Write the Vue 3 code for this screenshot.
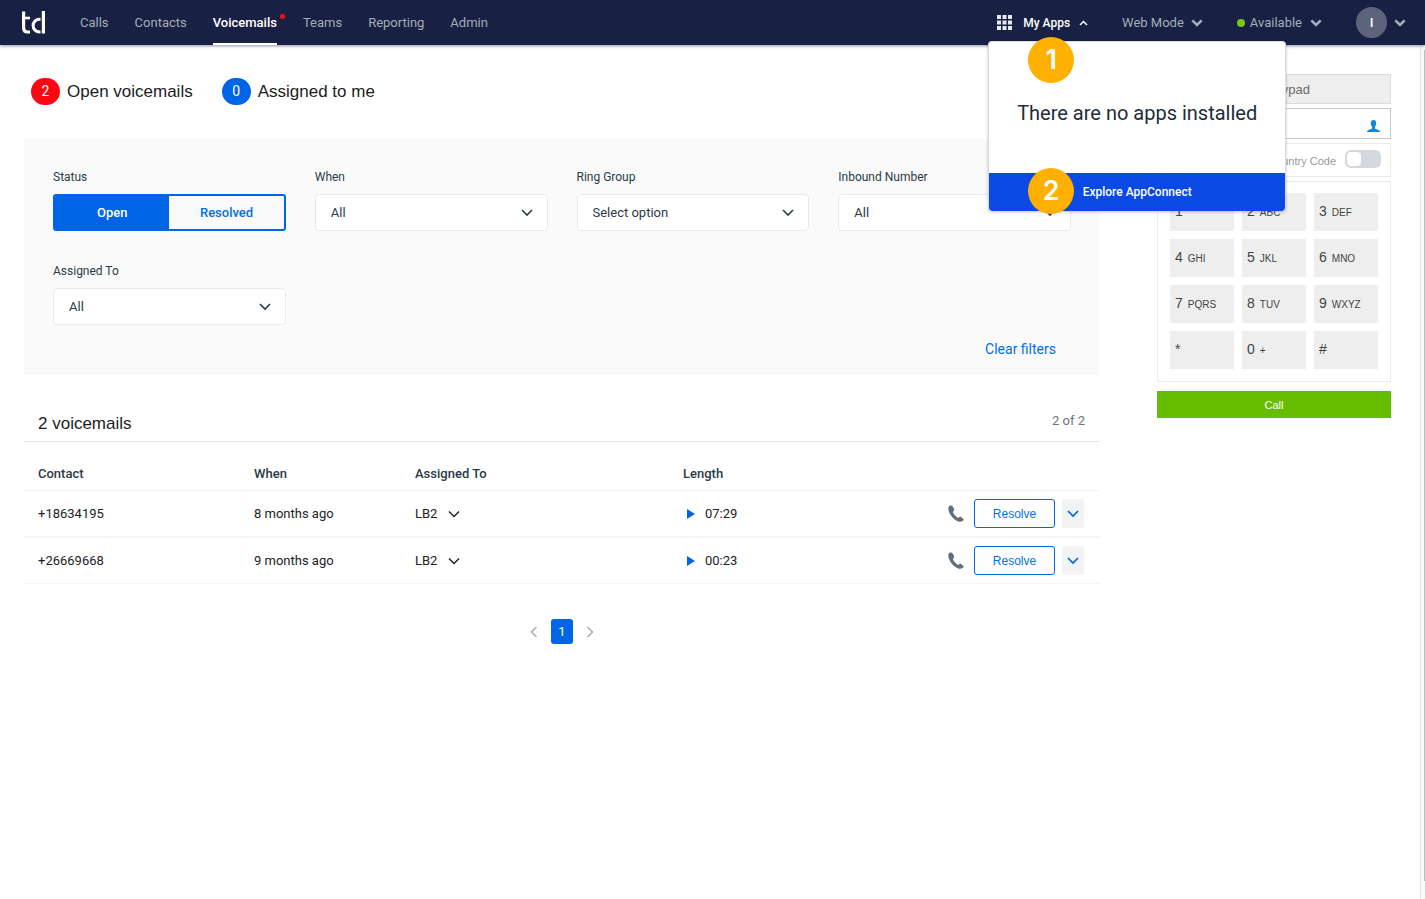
<script setup>
import { ref } from 'vue'

const navItems = ['Calls', 'Contacts', 'Voicemails', 'Teams', 'Reporting', 'Admin']
const active = 'Voicemails'

const filters = [
  { id: 'when', label: 'When', value: 'All' },
  { id: 'ring-group', label: 'Ring Group', value: 'Select option' },
  { id: 'inbound', label: 'Inbound Number', value: 'All' },
  { id: 'assigned', label: 'Assigned To', value: 'All' },
]

const voicemails = [
  { contact: '+18634195', when: '8 months ago', assignee: 'LB2', length: '07:29' },
  { contact: '+26669668', when: '9 months ago', assignee: 'LB2', length: '00:23' },
]

const keys = [
  ['1', ''], ['2', 'ABC'], ['3', 'DEF'],
  ['4', 'GHI'], ['5', 'JKL'], ['6', 'MNO'],
  ['7', 'PQRS'], ['8', 'TUV'], ['9', 'WXYZ'],
  ['*', ''], ['0', '+'], ['#', ''],
]

const status = ref('Open')
const countryCode = ref(false)
const number = ref('')
</script>

<template>
  <div class="app">
    <header class="topbar">
      <a class="logo" href="#" aria-label="Home">
        <svg width="24" height="24" viewBox="0 0 24 24" fill="none" stroke="#fff">
          <path d="M1.6 0.500v16.500q0 4 4 4H8" stroke-width="3.200" />
          <path d="M0 7h8" stroke-width="2.600" />
          <path d="M18.500 8.200h-1a6.300 6.300 0 0 0 0 12.800h1" stroke-width="3" />
          <path d="M21.400 0v22.500" stroke-width="3.200" />
        </svg>
      </a>
      <nav class="nav">
        <a v-for="item in navItems" :key="item" href="#" class="nav-link" :class="{ active: item === active }">
          {{ item }}<span v-if="item === active" class="nav-dot"></span>
        </a>
      </nav>
      <div class="tools">
        <div class="apps">
          <button class="tool apps-btn" type="button">
            <svg width="15" height="15" viewBox="0 0 15 15" fill="#e8e9ee">
              <path d="M0 0h4v4H0zM5.5 0h4v4h-4zM11 0h4v4h-4zM0 5.5h4v4H0zM5.5 5.5h4v4h-4zM11 5.5h4v4h-4zM0 11h4v4H0zM5.5 11h4v4h-4zM11 11h4v4h-4z" />
            </svg>
            <span class="apps-label">My Apps</span>
            <svg width="9" height="6" viewBox="0 0 9 6" fill="none" stroke="#fff" stroke-width="1.5"><path d="M1 5l3.5-3.5L8 5" /></svg>
          </button>
          <div class="menu">
            <p class="menu-empty">There are no apps installed</p>
            <button class="menu-action" type="button">Explore AppConnect</button>
            <span class="step step-one">1</span>
            <span class="step step-two">2</span>
          </div>
        </div>
        <button class="tool mode" type="button">
          Web Mode
          <svg class="caret" width="12" height="8" viewBox="0 0 12 8"><path d="M1.3 1.3L6 6l4.7-4.7" /></svg>
        </button>
        <button class="tool available" type="button">
          <span class="online"></span>Available
          <svg class="caret" width="12" height="8" viewBox="0 0 12 8"><path d="M1.3 1.3L6 6l4.7-4.7" /></svg>
        </button>
        <button class="tool profile" type="button" aria-label="Account">
          <span class="avatar">I</span>
          <svg class="caret" width="12" height="8" viewBox="0 0 12 8"><path d="M1.3 1.3L6 6l4.7-4.7" /></svg>
        </button>
      </div>
    </header>

    <div class="body">
      <main class="content">
        <div class="counts">
          <h1 class="count"><span class="bubble red">2</span>Open voicemails</h1>
          <h1 class="count"><span class="bubble blue">0</span>Assigned to me</h1>
        </div>

        <section class="filters">
          <div class="filter-grid">
            <div class="field">
              <span id="status-label" class="label">Status</span>
              <div class="segmented" role="group" aria-labelledby="status-label">
                <button
                  v-for="s in ['Open', 'Resolved']" :key="s" type="button"
                  :class="{ on: status === s }" @click="status = s"
                >{{ s }}</button>
              </div>
            </div>
            <div v-for="f in filters" :key="f.id" class="field">
              <label class="label" :for="f.id">{{ f.label }}</label>
              <div class="select">
                <select :id="f.id"><option>{{ f.value }}</option></select>
                <svg width="12" height="8" viewBox="0 0 12 8" fill="none" stroke="#2b3a47" stroke-width="1.6"><path d="M1 1l5 5 5-5" /></svg>
              </div>
            </div>
          </div>
          <a class="clear" href="#">Clear filters</a>
        </section>

        <div class="list-head">
          <h2>2 voicemails</h2>
          <span class="range">2 of 2</span>
        </div>

        <table class="list">
          <colgroup>
            <col class="c-contact"><col class="c-when"><col class="c-assigned"><col class="c-length"><col>
          </colgroup>
          <thead>
            <tr><th>Contact</th><th>When</th><th>Assigned To</th><th>Length</th><th></th></tr>
          </thead>
          <tbody>
            <tr v-for="v in voicemails" :key="v.contact">
              <td>{{ v.contact }}</td>
              <td>{{ v.when }}</td>
              <td>
                <button class="assignee" type="button">
                  {{ v.assignee }}
                  <svg width="12" height="8" viewBox="0 0 12 8" fill="none" stroke="#222" stroke-width="1.5"><path d="M1 1.500l5 5 5-5" /></svg>
                </button>
              </td>
              <td>
                <button class="play" type="button">
                  <svg width="8" height="10" viewBox="0 0 8 10" fill="#0064e6"><path d="M0 0l8 5-8 5z" /></svg>
                  {{ v.length }}
                </button>
              </td>
              <td>
                <div class="actions">
                  <button class="phone" type="button" aria-label="Call back">
                    <svg width="16" height="18" viewBox="0 0 16 18" fill="#5f6f7c">
                      <path d="M2.200.6C1 1 .3 2.200.3 3.600c.1 2.800 1.600 6 4.200 8.800 2.500 2.700 5.500 4.500 7.700 4.300 1.300-.1 2.500-.7 3.200-1.500.4-.4.3-.9-.1-1.300l-2.200-1.900c-.4-.4-.9-.4-1.400-.1l-1.500.8c-.3.100-.6.100-.9-.1C7.800 11.500 6 9.400 5 7.500c-.1-.3-.1-.6.1-.8L6 5.400c.3-.4.3-.8.100-1.300L4.300 1.100C3.900.3 3.100.3 2.200.6z" />
                    </svg>
                  </button>
                  <button class="resolve" type="button">Resolve</button>
                  <button class="more" type="button" aria-label="More actions">
                    <svg width="12" height="8" viewBox="0 0 12 8" fill="none" stroke="#0064e6" stroke-width="1.7"><path d="M1 1l5 5 5-5" /></svg>
                  </button>
                </div>
              </td>
            </tr>
          </tbody>
        </table>

        <nav class="pager" aria-label="Pages">
          <button type="button" aria-label="Previous">
            <svg width="8" height="12" viewBox="0 0 8 12"><path d="M6.500 1L1.500 6l5 5" /></svg>
          </button>
          <button type="button" class="current">1</button>
          <button type="button" aria-label="Next">
            <svg width="8" height="12" viewBox="0 0 8 12"><path d="M1.500 1l5 5-5 5" /></svg>
          </button>
        </nav>
      </main>

      <aside class="dialer">
        <button class="tab" type="button">Keypad</button>
        <div class="number">
          <input v-model="number" type="tel" aria-label="Phone number">
          <svg width="13" height="13" viewBox="0 0 13 13" fill="#0d8bd9">
            <path d="M6.500 0C8.300 0 9.200 1.200 9.200 3.200 9.200 4.900 8.500 6.200 7.900 6.900v1.500l3.600 1.600c1 .5 1.500 1 1.500 2H0c0-1 .5-1.500 1.500-2l3.600-1.600V6.900C4.500 6.200 3.800 4.900 3.800 3.200 3.800 1.200 4.700 0 6.500 0z" />
          </svg>
        </div>
        <label class="country">
          <span>Country Code</span>
          <input v-model="countryCode" type="checkbox" class="switch">
        </label>
        <div class="pad">
          <button v-for="[digit, letters] in keys" :key="digit" class="key" type="button">
            {{ digit }}<small>{{ letters }}</small>
          </button>
        </div>
        <button class="call" type="button">Call</button>
      </aside>

      <div class="scroll"><div class="thumb"></div></div>
    </div>
  </div>
</template>

<style>
body { background: #fff; }
</style>

<style scoped>
.app {
  min-height: 100vh;
  display: flex;
  flex-direction: column;
  font-family: Roboto, "Liberation Sans", sans-serif;
  font-size: 14px;
  color: #222;
}
.app *, .app *::before { box-sizing: border-box; }
button, input, select { font: inherit; color: inherit; margin: 0; }
button { background: none; border: 0; padding: 0; cursor: pointer; }
a { text-decoration: none; }
svg { display: block; flex: none; }

.topbar {
  position: relative;
  z-index: 2;
  display: flex;
  height: 45px;
  background: #182043;
  box-shadow: 0 1px 3px rgba(24, 32, 67, .5);
}
.logo { display: flex; align-items: center; width: 80px; padding-left: 22px; }
.nav { display: flex; gap: 26px; }
.nav-link {
  position: relative;
  display: flex;
  align-items: center;
  font-size: 13px;
  color: #a5aeb6;
  border-bottom: 2px solid transparent;
  padding-top: 2px;
}
.nav-link.active { color: #fff; font-weight: 500; border-color: #fff; }
.nav-dot {
  position: absolute;
  top: 14px;
  right: -8px;
  width: 5px;
  height: 5px;
  border-radius: 2px;
  background: #ff0514;
}
.tools { display: flex; margin-left: auto; padding-right: 19px; }
.tool { display: flex; align-items: center; height: 45px; font-size: 13px; color: #a5aeb6; }
.caret { fill: none; stroke: #a5aeb6; stroke-width: 2.6; }
.apps { position: relative; margin-right: 34px; }
.apps-btn { gap: 9px; color: #fff; font-size: 12px; font-weight: 500; }
.apps-label { padding-left: 2px; }
.mode { gap: 7px; margin-right: 34px; }
.available { gap: 8px; margin-right: 34px; }
.online { width: 8px; height: 8px; margin-right: -3px; border-radius: 50%; background: #7cc41f; }
.profile { gap: 7px; }
.avatar {
  display: flex;
  align-items: center;
  justify-content: center;
  width: 31px;
  height: 31px;
  border-radius: 50%;
  background: #5d637b;
  color: #fff;
  font-weight: 500;
}

.menu {
  position: absolute;
  top: 41px;
  left: -9px;
  width: 298px;
  border: 1px solid #d8dbe0;
  border-width: 1px 1px 0;
  border-radius: 4px;
  background: #fff;
  box-shadow: 0 1px 3px rgba(0, 0, 0, .25);
}
.menu-empty { margin: 0; padding: 59px 0 48px; font-size: 20px; line-height: 24px; text-align: center; color: #222c38; white-space: nowrap; }
.menu-action {
  display: block;
  width: 100%;
  height: 38px;
  border-radius: 0 0 4px 4px;
  background: #0b49e5;
  color: #fff;
  font-size: 12px;
  font-weight: 500;
}
.step {
  position: absolute;
  left: 39px;
  width: 46px;
  line-height: 46px;
  border-radius: 50%;
  background: #ffb000;
  color: #fff;
  font-family: Inter, sans-serif;
  font-size: 27px;
  font-weight: 600;
  text-align: center;
}
.step-one { top: -5px; }
.step-two { top: 126px; }

.body { flex: 1; display: flex; }
.content { flex: 1; min-width: 0; padding: 33px 0 0 24px; }
.counts { display: flex; gap: 29px; padding-left: 7px; margin-bottom: 33px; }
.count, .list-head h2 {
  margin: 0;
  font-family: "Liberation Sans", Arial, sans-serif;
  font-size: 17px;
  line-height: 20px;
  font-weight: 400;
  color: #1c1c1c;
}
.count { display: flex; align-items: center; gap: 7px; }
.bubble { width: 29px; line-height: 27px; border-radius: 14px; color: #fff; font-size: 14px; text-align: center; font-family: Roboto, sans-serif; }
.red { background: #ff0514; }
.blue { background: #0064e6; }

.filters { height: 237px; padding: 30px 29px 0; background: #fafafa; }
.filter-grid { display: grid; grid-template-columns: repeat(4, 1fr); gap: 31px 29px; }
.field { display: flex; flex-direction: column; }
.label { height: 26px; line-height: 18px; font-size: 12px; color: #2b3a47; }
.segmented {
  display: flex;
  height: 37px;
  border: 2px solid #0064e6;
  border-radius: 3px;
  overflow: hidden;
}
.segmented button { flex: 1; color: #0070ea; font-size: 13px; font-weight: 500; }
.segmented .on { background: #0064e6; color: #fff; }
.select { display: grid; align-items: center; height: 37px; }
.select > * { grid-area: 1 / 1; }
.select select {
  width: 100%;
  height: 37px;
  padding: 0 15px;
  appearance: none;
  border: 1px solid #e7eaec;
  border-radius: 4px;
  background: #fff;
  color: #2b3a47;
  font-size: 13px;
}
.select svg { justify-self: end; margin-right: 15px; pointer-events: none; }
.clear { display: block; width: max-content; margin: 15px 15px 0 auto; font-size: 14px; line-height: 18px; color: #0070ea; }

.list-head {
  display: flex;
  justify-content: space-between;
  align-items: flex-end;
  height: 67px;
  padding: 0 15px 7px 14px;
  border-bottom: 1px solid #e7e7e7;
}
.range { line-height: 26px; font-size: 13px; color: #6b7680; }

.list { width: 100%; table-layout: fixed; border-collapse: separate; border-spacing: 0; }
.c-contact { width: 216px; }
.c-when { width: 161px; }
.c-assigned { width: 268px; }
.c-length { width: 200px; }
.list th { height: 49px; padding: 14px 14px 0; font-size: 13px; font-weight: 500; text-align: left; color: #2b3a47; border-bottom: 1px solid #f3f3f3; }
.list td { height: 47px; padding: 0 14px; font-size: 13px; border-bottom: 2px solid #f5f5f5; }
.list tr:last-child td { height: 46px; border-bottom-width: 1px; }
.assignee { display: flex; align-items: center; gap: 11px; }
.play { display: flex; align-items: center; gap: 10px; padding-left: 4px; }
.list td:last-child { padding-right: 16px; }
.actions { display: flex; justify-content: flex-end; align-items: center; }
.resolve {
  width: 81px;
  height: 29px;
  margin: 0 7px 0 10px;
  border: 1px solid #0064e6;
  border-radius: 3px;
  background: #fff;
  color: #0070ea;
  font-family: "Liberation Sans", Arial, sans-serif;
  font-size: 12px;
}
.more { display: flex; align-items: center; justify-content: center; width: 22px; height: 29px; border-radius: 3px; background: #f2f3f5; }

.pager { display: flex; justify-content: center; align-items: center; gap: 13px; padding-top: 35px; }
.pager svg { fill: none; stroke: #a5abb1; stroke-width: 1.5; }
.pager .current { width: 22px; height: 25px; border-radius: 3px; background: #0064e6; color: #fff; font-size: 13px; }

.dialer {
  width: 234px;
  margin: 29px 29px 0 57px;
  display: flex;
  flex-direction: column;
  gap: 4px;
  font-family: "Liberation Sans", Arial, sans-serif;
  color: #444;
}
.tab { height: 30px; padding-left: 28px; border: 1px solid #dcdcdc; background: #eee; font-size: 13px; color: #6a6a6a; }
.number { display: grid; align-items: center; height: 31px; border: 1px solid #c4c6c8; }
.number > * { grid-area: 1 / 1; }
.number input { width: 100%; height: 29px; padding: 0 30px 0 8px; border: 0; background: #fff; font-size: 13px; outline: 0; }
.number svg { justify-self: end; margin: 6px 10px 0 0; }
.country {
  display: flex;
  align-items: center;
  justify-content: flex-end;
  gap: 9px;
  height: 34px;
  padding: 0 9px 2px 0;
  border: 1px solid #ebebeb;
  font-size: 11px;
  color: #9a9a9a;
}
.country span { padding-top: 3px; }
.switch { position: relative; width: 36px; height: 18px; appearance: none; border-radius: 6px; background: #d3d8dc; }
.switch::before { content: ""; position: absolute; inset: 2px auto 2px 2px; width: 14px; border-radius: 4px; background: #fff; }
.switch:checked { background: #0064e6; }
.switch:checked::before { left: 20px; }
.pad { display: grid; grid-template-columns: repeat(3, 1fr); gap: 8px; height: 201px; padding: 11px 12px; border: 1px solid #ebebeb; align-content: start; }
.key { display: flex; align-items: baseline; gap: 5px; height: 38px; padding-left: 5px; line-height: 37px; background: #eee; font-size: 14px; color: #444; }
.key small { font-size: 10px; }
.call { height: 27px; margin-top: 5px; background: #66bd00; color: #fff; font-size: 11px; }

.scroll { width: 5px; border-left: 1px solid #e6e6e6; background: #fafafa; padding: 5px 0 18px 3px; display: flex; }
.thumb { flex: 1; background: #bdbdbd; }
</style>
